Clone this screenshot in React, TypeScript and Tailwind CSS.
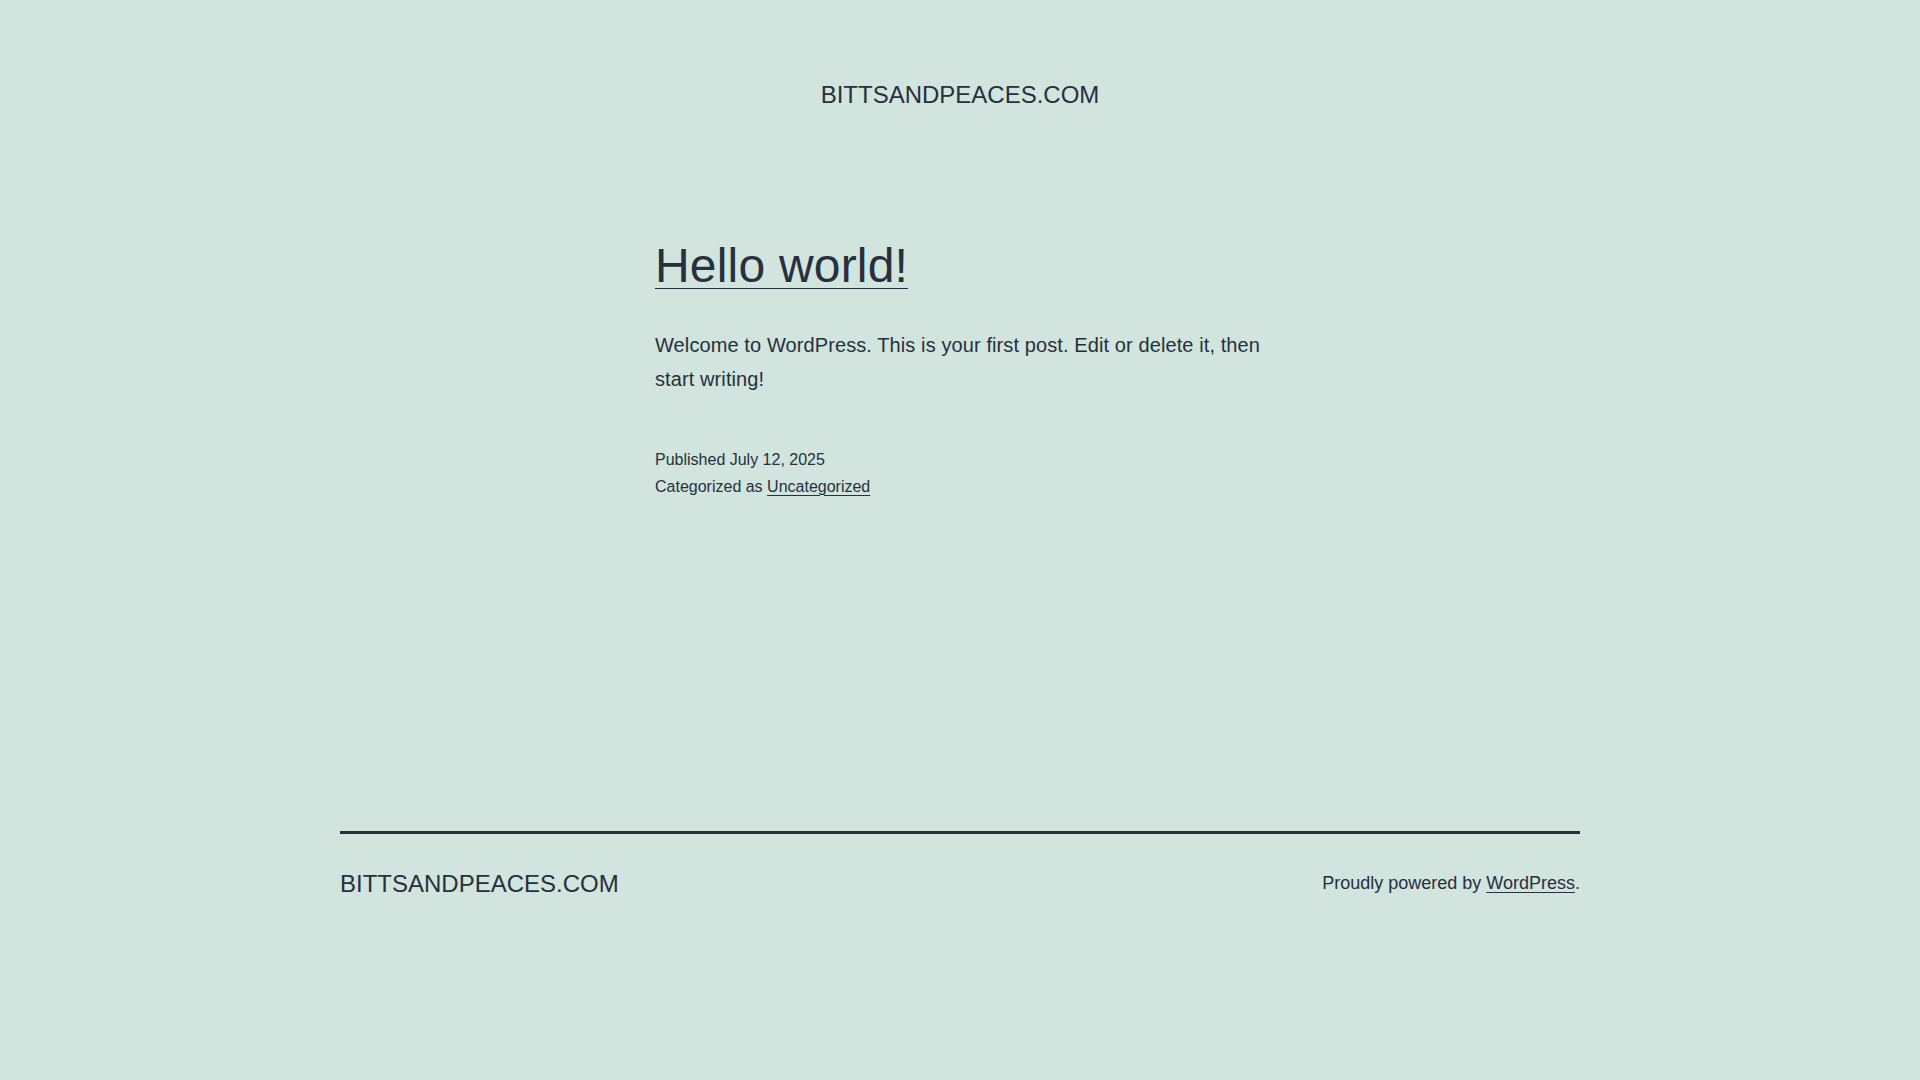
const App = () => {
  return (
    <div className="min-h-screen bg-[#d1e4dd] text-[#28303d] font-['Liberation_Sans',Arial,sans-serif]">
      <header className="pt-[79px] text-center">
        <p className="text-[24px] leading-[1.3] uppercase">
          <a href="#">BITTSANDPEACES.COM</a>
        </p>
      </header>

      <main className="mx-auto w-[610px] pt-[125px]">
        <h2 className="text-[48px] leading-[1.3] tracking-[0.2px]">
          <a href="#" className="underline decoration-1 underline-offset-[6px]">
            Hello world!
          </a>
        </h2>
        <p className="mt-[30px] text-[20px] leading-[1.7] tracking-[0.1px]">
          Welcome to WordPress. This is your first post. Edit or delete it, then start writing!
        </p>
        <div className="mt-[50px] text-[16px] leading-[1.7] font-['Liberation_Sans_Narrow','Arial_Narrow',sans-serif]">
          <p>Published July 12, 2025</p>
          <p>
            Categorized as{" "}
            <a href="#" className="underline decoration-1 underline-offset-[3px]">
              Uncategorized
            </a>
          </p>
        </div>
      </main>

      <footer className="mx-auto mt-[331px] w-[1240px] border-t-[3px] border-[#28303d] pt-[34px] pb-[120px]">
        <div className="flex items-center justify-between">
          <p className="text-[24px] leading-[1.3] uppercase">
            <a href="#">BITTSANDPEACES.COM</a>
          </p>
          <p className="text-[18px] leading-[1.3]">
            Proudly powered by{" "}
            <a href="#" className="underline decoration-1 underline-offset-[3px]">
              WordPress
            </a>
            .
          </p>
        </div>
      </footer>
    </div>
  );
};

export default App;
